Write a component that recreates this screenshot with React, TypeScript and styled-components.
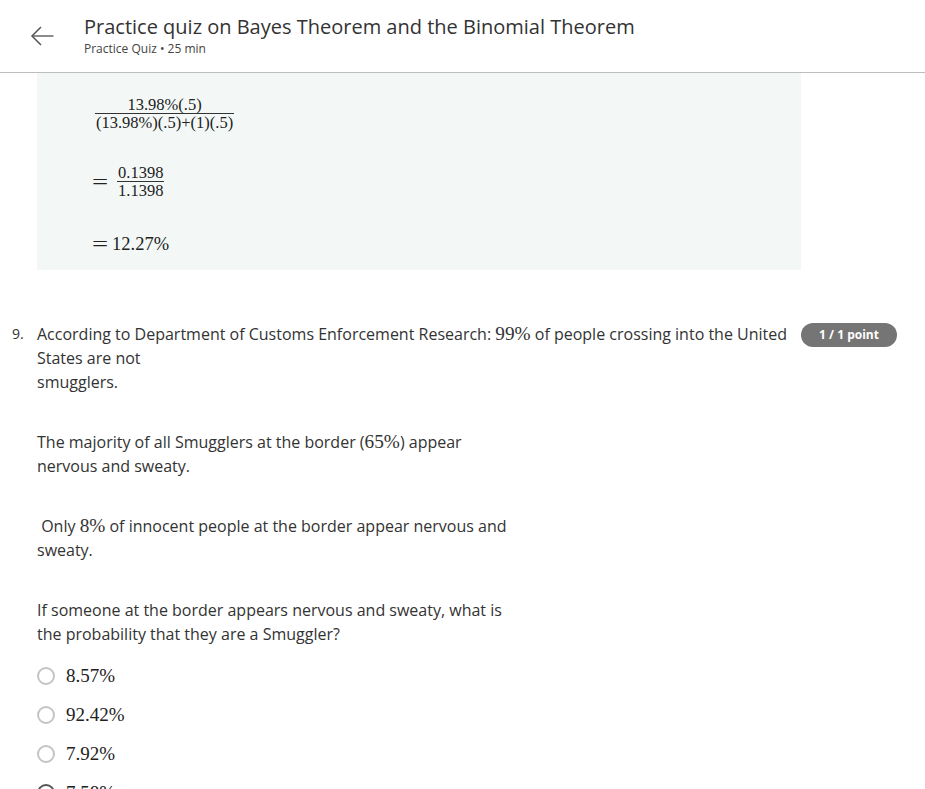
import React from "react";
import styled, { createGlobalStyle } from "styled-components";

const GlobalStyle = createGlobalStyle`
  html, body {
    margin: 0;
    padding: 0;
    background: #ffffff;
  }
  body {
    font-family: "Open Sans", "Liberation Sans", sans-serif;
    color: #333333;
    overflow: hidden;
  }
`;

const BackArrow = () => (
  <svg width="26" height="26" viewBox="0 0 26 26" fill="none">
    <path d="M24.5 13 H3" stroke="#666" strokeWidth="1.5" />
    <path d="M12 4 L3 13 L12 22" stroke="#555" strokeWidth="1.5" strokeLinejoin="miter" />
  </svg>
);

const options = [
  { label: "8.57%", selected: false },
  { label: "92.42%", selected: false },
  { label: "7.92%", selected: false },
  { label: "7.58%", selected: true },
];

const App = () => {
  return (
    <Page>
      <GlobalStyle />
      <Header>
        <BackButton>
          <BackArrow />
        </BackButton>
        <TitleBlock>
          <Title>Practice quiz on Bayes Theorem and the Binomial Theorem</Title>
          <Subtitle>Practice Quiz • 25 min</Subtitle>
        </TitleBlock>
      </Header>

      <Body>
        <QuestionRow first>
          <Number />
          <Content>
            <Feedback>
              <MathRow indent={3}>
                <Frac>
                  <FracPart>13.98%(.5)</FracPart>
                  <FracBar />
                  <FracPart>(13.98%)(.5)+(1)(.5)</FracPart>
                </Frac>
              </MathRow>
              <MathRow gap={33}>
                <Eq>=</Eq>
                <Frac offset={5}>
                  <FracPart>0.1398</FracPart>
                  <FracBar />
                  <FracPart>1.1398</FracPart>
                </Frac>
              </MathRow>
              <MathRow gap={33}>
                <Eq>=</Eq>
                <MathBig>12.27%</MathBig>
              </MathRow>
            </Feedback>
          </Content>
          <span />
        </QuestionRow>

        <QuestionRow>
          <Number>9.</Number>
          <Content>
            <Paragraph wide>
              According to Department of Customs Enforcement Research: <MathInline>99%</MathInline> of
              people crossing into the United States are not
              <br />
              smugglers.
            </Paragraph>
            <Paragraph>
              The majority of all Smugglers at the border (<MathInline>65%</MathInline>) appear nervous and
              sweaty.
            </Paragraph>
            <Paragraph>
              &nbsp;Only <MathInline>8%</MathInline> of innocent people at the border appear nervous and
              sweaty.
            </Paragraph>
            <Paragraph>
              If someone at the border appears nervous and sweaty, what is the probability that they are a
              Smuggler?
            </Paragraph>
            <Options>
              {options.map((o) => (
                <Option key={o.label}>
                  <Radio selected={o.selected} />
                  <OptionText>{o.label}</OptionText>
                </Option>
              ))}
            </Options>
          </Content>
          <Badge>1 / 1 point</Badge>
        </QuestionRow>
      </Body>
    </Page>
  );
};

export default App;

const Page = styled.div`
  width: 925px;
  height: 789px;
  overflow: hidden;
`;

const Header = styled.header`
  height: 72px;
  border-bottom: 1px solid #bdbdbd;
  display: flex;
  align-items: flex-start;
  box-sizing: content-box;
`;

const BackButton = styled.div`
  width: 26px;
  height: 26px;
  margin: 23px 0 0 29px;
  display: flex;
`;

const TitleBlock = styled.div`
  margin: 12px 0 0 29px;
  display: flex;
  flex-direction: column;
`;

const Title = styled.h1`
  margin: 0;
  font-size: 20px;
  line-height: 29px;
  font-weight: 400;
  color: #333;
`;

const Subtitle = styled.div`
  font-size: 12px;
  line-height: 15px;
  color: #444;
`;

const Body = styled.main`
  display: flex;
  flex-direction: column;
`;

const QuestionRow = styled.section<{ first?: boolean }>`
  display: grid;
  grid-template-columns: 37px 764px 96px;
  margin-top: ${({ first }) => (first ? "0" : "52px")};
`;

const Number = styled.div`
  padding-left: 12px;
  font-size: 14px;
  line-height: 24px;
  color: #333;
`;

const Content = styled.div`
  display: flex;
  flex-direction: column;
`;

const Feedback = styled.div`
  background: #f3f8f7;
  padding: 23px 0 14px 55px;
  display: flex;
  flex-direction: column;
  align-items: flex-start;
`;

const MathRow = styled.div<{ gap?: number; indent?: number }>`
  display: flex;
  align-items: center;
  margin-top: ${({ gap }) => gap ?? 0}px;
  margin-left: ${({ indent }) => indent ?? 0}px;
  font-family: "Liberation Serif", "Times New Roman", serif;
  color: #222;
`;

const Eq = styled.span`
  font-size: 22px;
  line-height: 24px;
  width: 16px;
  margin-right: 4px;
  transform: scaleX(1.3);
  transform-origin: left center;
`;

const Frac = styled.span<{ offset?: number }>`
  display: inline-flex;
  flex-direction: column;
  align-items: center;
  margin-left: ${({ offset }) => offset ?? 0}px;
`;

const FracPart = styled.span`
  font-size: 16.5px;
  line-height: 17px;
  padding: 0 1px;
  white-space: nowrap;
`;

const FracBar = styled.span`
  align-self: stretch;
  height: 1px;
  background: #333;
`;

const MathBig = styled.span`
  font-size: 18.5px;
  line-height: 24px;
`;

const MathInline = styled.span`
  font-family: "Liberation Serif", "Times New Roman", serif;
  font-size: 19.3px;
  line-height: 1;
`;

const Paragraph = styled.p<{ wide?: boolean }>`
  margin: 0 0 36px;
  max-width: ${({ wide }) => (wide ? "752px" : "480px")};
  font-size: 16px;
  line-height: 24px;
  color: #333;
`;

const Options = styled.div`
  display: flex;
  flex-direction: column;
  gap: 15px;
  margin-top: -18px;
`;

const Option = styled.label`
  display: flex;
  align-items: center;
  gap: 11px;
  height: 24px;
`;

const Radio = styled.span<{ selected?: boolean }>`
  width: 18px;
  height: 18px;
  border-radius: 50%;
  border: 2px solid ${({ selected }) => (selected ? "#555" : "#c4c4c4")};
  box-sizing: border-box;
  flex: none;
`;

const OptionText = styled.span`
  font-family: "Liberation Serif", "Times New Roman", serif;
  font-size: 19px;
  color: #222;
`;

const Badge = styled.div`
  align-self: start;
  margin-top: 1px;
  height: 24px;
  border-radius: 12px;
  background: #757575;
  color: #fff;
  font-size: 12px;
  font-weight: 700;
  line-height: 24px;
  text-align: center;
`;
